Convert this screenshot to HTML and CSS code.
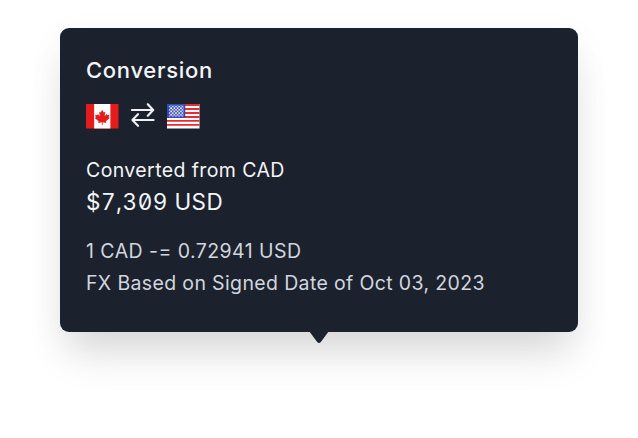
FILE: index.html
```html
<!DOCTYPE html>
<html lang="en">
<head>
<meta charset="utf-8">
<title>Conversion</title>
<link rel="stylesheet" href="styles.css">
</head>
<body>
<section class="card">
  <h1 class="title">Conversion</h1>
  <div class="flags">
    <svg class="flag" viewBox="0 0 32 24" preserveAspectRatio="none">
      <rect width="32" height="24" fill="#e61c1c"/>
      <rect x="8" width="16" height="24" fill="#fff"/>
      <path fill="#e61c1c" d="M16 5.6l-1.5 2.8-1.6-.8.8 4.2-2.1-2-.5 1.2-2.2-.4.8 2.4-1.1.8 3.8 3.2-.4 1.5 3.6-.6v3h.8v-3l3.6.6-.4-1.5 3.8-3.2-1.1-.8.8-2.4-2.2.4-.5-1.2-2.1 2 .8-4.2-1.6.8z"/>
    </svg>
    <svg class="arrows" viewBox="0 0 24 24">
      <path d="M1 7H22M16.8 1.2L22.2 7L16.8 12.8M22.6 17H1.7M7 11.2L1.4 17L7 22.8"/>
    </svg>
    <svg class="flag" viewBox="0 0 32 24" preserveAspectRatio="none">
      <defs>
        <pattern id="stars" width="3.2" height="3.2" patternUnits="userSpaceOnUse">
          <circle cx=".9" cy=".9" r=".85" fill="#fff"/>
          <circle cx="2.5" cy="2.5" r=".85" fill="#fff"/>
        </pattern>
      </defs>
      <rect width="32" height="24" fill="#fff"/>
      <path fill="#e92a30" d="M0 0h32v1.9H0zM0 3.9h32v1.9H0zM0 7.8h32v1.9H0zM0 11.7h32v1.9H0zM0 15.6h32v1.9H0zM0 19.5h32v1.9H0z"/>
      <rect width="18" height="13.6" fill="#3049b5"/>
      <rect x="2" y="1.5" width="14.4" height="10.8" fill="url(#stars)"/>
    </svg>
  </div>
  <p class="label">Converted from CAD</p>
  <p class="amount">$7,309 USD</p>
  <p class="note rate">1 CAD -= 0.72941 USD</p>
  <p class="note">FX Based on Signed Date of Oct 03, 2023</p>
  <svg class="pointer" viewBox="0 0 20 13"><path d="M0 0H20L12 10.8Q10 13.2 8 10.8Z"/></svg>
</section>
</body>
</html>
```
FILE: styles.css
```css
* {
  box-sizing: border-box;
}

body {
  margin: 0;
  min-height: 438px;
  padding: 28px 60px;
  background: #fff;
  font-family: Inter, "Liberation Sans", sans-serif;
}

.card {
  position: relative;
  height: 304px;
  padding: 26px;
  border-radius: 9px;
  background: #1b212d;
  color: #f4f5f7;
  box-shadow: 0 30px 42px -8px rgba(0, 0, 0, 0.12), 0 10px 36px rgba(0, 0, 0, 0.05);
}

.title,
.label,
.amount,
.note {
  margin: 0;
  white-space: nowrap;
}

.title {
  font-size: 22px;
  font-weight: 500;
  line-height: 32px;
  letter-spacing: 0.7px;
}

.flags {
  display: flex;
  align-items: center;
  gap: 12.25px;
  height: 24.5px;
  margin-top: 18px;
}

.flag {
  width: 32.5px;
  height: 24.5px;
}

.arrows {
  width: 24px;
  height: 24px;
  margin-bottom: 2px;
  fill: none;
  stroke: #f0f2f6;
  stroke-width: 2.1;
  stroke-linecap: round;
  stroke-linejoin: round;
}

.label {
  margin-top: 25.5px;
  font-size: 19.5px;
  line-height: 32px;
  letter-spacing: 0.4px;
}

.amount {
  font-size: 22.5px;
  line-height: 31px;
  letter-spacing: 0.5px;
  font-feature-settings: "tnum", "zero";
}

.note {
  color: #d2d6de;
  font-size: 19.5px;
  line-height: 32px;
  letter-spacing: 0.36px;
}

.rate {
  margin-top: 18px;
  letter-spacing: 0.45px;
}

.pointer {
  position: absolute;
  top: 303px;
  left: 249px;
  width: 20px;
  height: 13px;
  fill: #1b212d;
}
```
